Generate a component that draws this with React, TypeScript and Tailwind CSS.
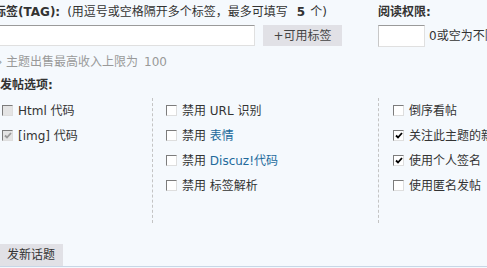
import React from 'react';

const font = "font-['DejaVu_Sans','Noto_Sans_CJK_SC',sans-serif]";

function Box({ checked = false, disabled = false }: { checked?: boolean; disabled?: boolean }) {
    return (
        <span
            className={`inline-flex h-[11px] w-[11px] shrink-0 items-center justify-center border border-t-[#7c7c7c] border-l-[#7c7c7c] border-r-[#dedede] border-b-[#dedede] ${
                disabled ? 'bg-[#e4e4e4]' : 'bg-white'
            }`}
        >
            {checked && (
                <svg width="8" height="7" viewBox="0 0 8 7">
                    <path
                        d="M1 3.5 L3 5.5 L7 1"
                        fill="none"
                        stroke={disabled ? '#9a9a9a' : '#000'}
                        strokeWidth="1.8"
                    />
                </svg>
            )}
        </span>
    );
}

interface Opt {
    label: React.ReactNode;
    checked?: boolean;
    disabled?: boolean;
}

function Row({ label, checked, disabled }: Opt) {
    return (
        <div className="flex h-[25px] items-center gap-[5px] whitespace-nowrap">
            <Box checked={checked} disabled={disabled} />
            <span className="leading-[16px]">{label}</span>
        </div>
    );
}

const link = 'text-[#22699b]';

const col1: Opt[] = [
    { label: 'Html 代码', disabled: true },
    { label: '[img] 代码', disabled: true, checked: true },
];

const col2: Opt[] = [
    { label: <>禁用 URL 识别</> },
    { label: <>禁用 <span className={link}>表情</span></> },
    { label: <>禁用 <span className={link}>Discuz!代码</span></> },
    { label: <>禁用 标签解析</> },
];

const col3: Opt[] = [
    { label: '倒序看帖' },
    { label: '关注此主题的新回复', checked: true },
    { label: '使用个人签名', checked: true },
    { label: '使用匿名发帖' },
];

export default function App() {
    return (
        <div className={`h-[268px] w-[487px] overflow-hidden bg-[#f5f9fd] text-[12px] text-[#333] ${font}`}>
            {/* tags + read permission */}
            <div className="ml-[-6px] flex pt-[4px]">
                <div className="w-[384px] shrink-0">
                    <div className="h-[16px] whitespace-nowrap leading-[16px]">
                        <b>标签(TAG):</b>
                        <span className="ml-[7px]">(用逗号或空格隔开多个标签，最多可填写</span>
                        <b className="ml-[9px] mr-[5px]">5</b>个)
                    </div>
                    <div className="mt-[5px] flex items-center gap-[8px]">
                        <div className="h-[21px] w-[261px] border border-t-[#9a9a9a] border-l-[#c8c8c8] border-r-[#e0e0e0] border-b-[#e0e0e0] bg-white" />
                        <div className="flex h-[21px] w-[79px] items-center justify-center bg-[#e1e1e6] leading-[16px] text-[#444]">
                            +可用标签
                        </div>
                    </div>
                </div>
                <div className="shrink-0 whitespace-nowrap">
                    <div className="h-[16px] font-bold leading-[16px]">阅读权限:</div>
                    <div className="mt-[5px] flex items-center gap-[4px] leading-[16px]">
                        <div className="h-[22px] w-[47px] border border-t-[#9a9a9a] border-l-[#c8c8c8] border-r-[#e0e0e0] border-b-[#e0e0e0] bg-white" />
                        0或空为不限
                    </div>
                </div>
            </div>

            {/* price hint */}
            <div className="ml-[-5px] mt-[7px] flex h-[16px] items-center whitespace-nowrap leading-[16px] text-[#999]">
                <span className="w-[11px]">»</span>
                主题出售最高收入上限为 <span className="ml-[6px]">100</span>
            </div>

            {/* options */}
            <div className="mt-[7px] h-[16px] font-bold leading-[16px]">发帖选项:</div>
            <div className="mt-[5px] flex h-[125px]">
                <div className="w-[152px] shrink-0 pl-[2px]">
                    {col1.map((o, i) => (
                        <Row key={i} {...o} />
                    ))}
                </div>
                <div className="w-[226px] shrink-0 border-l border-dashed border-[#c4c4c4] pl-[13px]">
                    {col2.map((o, i) => (
                        <Row key={i} {...o} />
                    ))}
                </div>
                <div className="shrink-0 border-l border-dashed border-[#c4c4c4] pl-[14px]">
                    {col3.map((o, i) => (
                        <Row key={i} {...o} />
                    ))}
                </div>
            </div>

            {/* tab bar */}
            <div className="mt-[21px] border-b border-[#c8d7e6]">
                <div className="flex h-[22px] w-[63px] items-center bg-[#e1e1e6] pl-[7px] leading-[16px]">发新话题</div>
            </div>
        </div>
    );
}
